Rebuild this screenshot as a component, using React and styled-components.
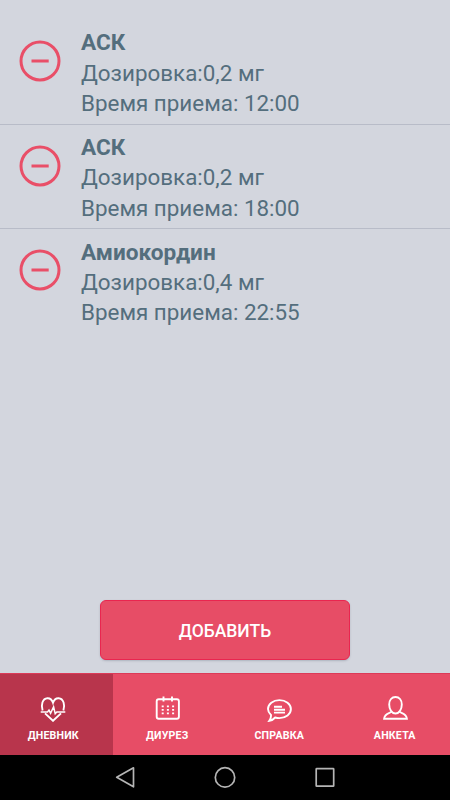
import React from 'react'
import styled, { createGlobalStyle } from 'styled-components'

const medicines = [
    { id: 1, name: 'АСК', dose: '0,2 мг', time: '12:00' },
    { id: 2, name: 'АСК', dose: '0,2 мг', time: '18:00' },
    { id: 3, name: 'Амиокордин', dose: '0,4 мг', time: '22:55' },
]

function MinusIcon() {
    return (
        <svg width="42" height="42" viewBox="0 0 42 42" fill="none" stroke="#e94f68">
            <circle cx="21" cy="21" r="19" strokeWidth="3" />
            <path d="M12.5 21H29.7" strokeWidth="3" />
        </svg>
    )
}

function HeartIcon() {
    return (
        <TabSvg viewBox="0 0 26 26">
            <path d="M2.6 14.5C.8 9.5 2.3 2.400 7.400 2.200c2.700-.1 4.600 1.500 5.600 4.500 1-3 2.900-4.600 5.600-4.500 5.100.2 6.600 7.300 4.800 12.300" />
            <path d="M5 17.4l8 7.4 8-7.4" />
            <path d="M.7 16h6.800l1.500-1.900 1.600 3.100 3-6.400 1.600 6.900 1.600-1.700h8.500" strokeWidth="1.5" />
        </TabSvg>
    )
}

function CalendarIcon() {
    return (
        <TabSvg viewBox="0 0 26 26">
            <rect x="2.7" y="3.2" width="22.2" height="19.6" rx="2" />
            <path d="M9.5 .4v5M18 .4v5" />
            <path d="M8.7 9.4v9M13.9 9.4v9M19.1 9.4v9" strokeWidth="2" strokeDasharray="1.9 1.6" />
        </TabSvg>
    )
}

function ChatIcon() {
    return (
        <TabSvg viewBox="0 0 26 26">
            <path d="M5 19C3 17.2 2 15.2 2 13.1c0-5 5-9 11.4-9s11.5 4 11.5 9-5.1 9-11.5 9c-1.5 0-2.9-.2-4.2-.6-1.5 1.7-3.3 2.8-5.9 3.3 1.2-1.7 1.900-3.500 1.700-5.800z" />
            <path d="M8 10.8h8M8 13.7h11M8 16.6h11" />
        </TabSvg>
    )
}

function PersonIcon() {
    return (
        <TabSvg viewBox="0 0 26 26">
            <path d="M13.5 1c3.7 0 6.3 3 6.3 7.5 0 4.900-2.700 9-6.300 9s-6.300-4.100-6.300-9C7.200 4 9.800 1 13.500 1z" />
            <path d="M9.5 15.6c-.8 1.600-7 1.200-7.400 7.200h22.800c-.4-6-6.600-5.600-7.400-7.200" />
        </TabSvg>
    )
}

const tabs = [
    { label: 'ДНЕВНИК', icon: HeartIcon, active: true, shift: -6 },
    { label: 'ДИУРЕЗ', icon: CalendarIcon, shift: -3 },
    { label: 'СПРАВКА', icon: ChatIcon, shift: -4 },
    { label: 'АНКЕТА', icon: PersonIcon, shift: 2 },
]

function App() {
    return (
        <Screen>
            <GlobalStyle />
            <List>
                {medicines.map((item) => (
                    <Row key={item.id}>
                        <RemoveButton type="button" aria-label="Удалить">
                            <MinusIcon />
                        </RemoveButton>
                        <div>
                            <Name>{item.name}</Name>
                            <Info>Дозировка:{item.dose}</Info>
                            <Info>Время приема: {item.time}</Info>
                        </div>
                    </Row>
                ))}
            </List>
            <AddButton type="button">ДОБАВИТЬ</AddButton>
            <TabBar>
                {tabs.map(({ label, icon: Icon, active, shift }) => (
                    <Tab key={label} type="button" $active={active} $shift={shift}>
                        <Icon />
                        <TabLabel>{label}</TabLabel>
                    </Tab>
                ))}
            </TabBar>
            <SystemBar>
                <svg width="24" height="24" viewBox="0 0 24 24">
                    <path d="M20.5 2.8v19L3.7 12.3z" />
                </svg>
                <svg width="24" height="24" viewBox="0 0 24 24">
                    <circle cx="12" cy="12.4" r="9.7" />
                </svg>
                <svg width="24" height="24" viewBox="0 0 24 24">
                    <rect x="3.2" y="3.7" width="17.5" height="17.5" rx=".5" />
                </svg>
            </SystemBar>
        </Screen>
    )
}

const GlobalStyle = createGlobalStyle`
* {
  box-sizing: border-box;
}
body {
  margin: 0;
  font-family: Roboto, "Noto Sans", sans-serif;
}
button {
  border: 0;
  padding: 0;
  font-family: inherit;
}
`;
const Screen = styled.div`
display: flex;
flex-direction: column;
width: 450px;
height: 800px;
overflow: hidden;
background-color: #d3d6de;
`;
const List = styled.div`
flex: 1;
padding-top: 20px;
`;
const Row = styled.div`
display: flex;
height: 104.6px;
padding: 7.4px 0 0 19px;
color: #546e7d;
border-bottom: 1px solid #b8bcc8;
&:last-child {
  border-bottom: 0;
}
`;
const RemoveButton = styled.button`
width: 42px;
height: 42px;
margin: 12.6px 20px 0 0;
background: none;
svg {
  display: block;
}
`;
const Name = styled.div`
padding-top: 1px;
font-size: 22.6px;
font-weight: 700;
line-height: 29.5px;
`;
const Info = styled.div`
font-size: 22.4px;
line-height: 30.3px;
`;
const AddButton = styled.button`
flex: none;
align-self: center;
width: 250px;
height: 60px;
margin-bottom: 12.5px;
padding-top: 2px;
border: 1px solid #e9264f;
border-radius: 6px;
background-color: #e74d66;
box-shadow: 0 1px 2px rgba(90, 100, 120, 0.3);
color: #fff;
font-size: 17.5px;
font-weight: 500;
`;
const TabBar = styled.div`
display: flex;
flex: none;
height: 82.5px;
border-top: 1px solid #dc3a58;
background-color: #e74d66;
`;
const Tab = styled.button`
display: flex;
flex: 0 0 25%;
flex-direction: column;
align-items: center;
padding-top: 22.5px;
padding-left: ${(props) => (props.$shift > 0 ? props.$shift : 0)}px;
padding-right: ${(props) => (props.$shift < 0 ? -props.$shift : 0)}px;
background-color: ${(props) => (props.$active ? '#b8354c' : 'transparent')};
color: #fff;
`;
const TabSvg = styled.svg`
width: 26px;
height: 26px;
fill: none;
stroke: #fff;
stroke-width: 1.9;
`;
const TabLabel = styled.span`
margin-top: 7px;
font-size: 10.6px;
font-weight: 700;
line-height: 14px;
letter-spacing: 0.2px;
`;
const SystemBar = styled.div`
display: flex;
flex: none;
justify-content: center;
gap: 76px;
height: 45px;
padding-top: 10px;
background-color: #000;
svg {
  fill: none;
  stroke: #b5b5b5;
  stroke-width: 1.7;
  stroke-linejoin: round;
}
`;
export default App
